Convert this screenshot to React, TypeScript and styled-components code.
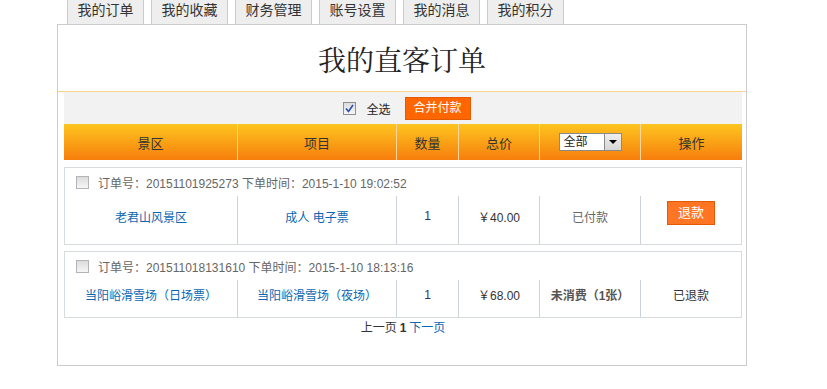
import styled, { createGlobalStyle } from "styled-components";

const GlobalStyle = createGlobalStyle`
  body {
    margin: 0;
    background: #fff;
    font-family: "Liberation Sans", "Noto Sans CJK SC", sans-serif;
    font-size: 12px;
    color: #333;
    overflow: hidden;
  }
`;

const tabs = ["我的订单", "我的收藏", "财务管理", "账号设置", "我的消息", "我的积分"];

const columns = "173px 159px 62px 81px 101px 102px";

type Order = {
  id: string;
  time: string;
  spot: string;
  item: string;
  qty: number;
  price: string;
  status: string;
  strong?: boolean;
  action: "refund" | string;
};

const orders: Order[] = [
  {
    id: "20151101925273",
    time: "2015-1-10 19:02:52",
    spot: "老君山风景区",
    item: "成人 电子票",
    qty: 1,
    price: "40.00",
    status: "已付款",
    action: "refund",
  },
  {
    id: "201511018131610",
    time: "2015-1-10 18:13:16",
    spot: "当阳峪滑雪场（日场票）",
    item: "当阳峪滑雪场（夜场）",
    qty: 1,
    price: "68.00",
    status: "未消费（1张）",
    strong: true,
    action: "已退款",
  },
];

const Page = styled.div`
  width: 690px;
  margin-left: 57px;
`;

const Tabs = styled.ul`
  display: flex;
  gap: 7px;
  margin: -6px 0 0 10px;
  padding: 0;
  list-style: none;
`;

const Tab = styled.li`
  width: 77px;
  height: 30px;
  box-sizing: border-box;
  background: #eee;
  border: 1px solid #ccc;
  border-bottom: none;
  line-height: 30px;
  text-align: center;
  font-size: 14px;
  color: #333;
`;

const Panel = styled.div`
  height: 342px;
  box-sizing: border-box;
  border: 1px solid #ccc;
`;

const Title = styled.h1`
  margin: 0;
  height: 66px;
  line-height: 68px;
  border-bottom: 1px solid #fcd48f;
  text-align: center;
  font-family: "Noto Serif CJK SC", "Noto Sans CJK SC", serif;
  font-size: 28px;
  font-weight: normal;
  color: #222;
`;

const Body = styled.div`
  padding: 0 4px 0 6px;
`;

const Toolbar = styled.div`
  height: 32px;
  display: flex;
  align-items: center;
  justify-content: center;
  padding-left: 8px;
  background: #f2f2f2;
`;

const Check = styled.span<{ $checked?: boolean }>`
  display: inline-flex;
  align-items: center;
  justify-content: center;
  width: 13px;
  height: 13px;
  box-sizing: border-box;
  border: 1px solid ${(p) => (p.$checked ? "#8f8f8f" : "#b4b4b4")};
  background: linear-gradient(#dcdcdc, #f6f6f6);
  svg {
    width: 9px;
    height: 9px;
  }
`;

const CheckLabel = styled.span`
  margin: 0 14px 0 10px;
  font-size: 12px;
  color: #222;
`;

const OrangeButton = styled.button<{ $size?: number }>`
  height: ${(p) => (p.$size === 13 ? 24 : 23)}px;
  padding: 0 ${(p) => (p.$size === 13 ? 10 : 8)}px;
  border: 1px solid #e45a00;
  background: ${(p) => (p.$size === 13 ? "#ff7523" : "#ff6600")};
  color: #fff;
  font-family: inherit;
  font-size: ${(p) => p.$size ?? 12}px;
  line-height: 20px;
  cursor: pointer;
`;

const HeadRow = styled.div`
  display: grid;
  grid-template-columns: ${columns};
  height: 36px;
  background: linear-gradient(#fdc51f, #f77e0d);
`;

const HeadCell = styled.div`
  display: flex;
  align-items: center;
  justify-content: center;
  font-size: 13px;
  color: #333;
  & + & {
    border-left: 1px solid #fbd79c;
  }
`;

const Select = styled.div`
  display: flex;
  width: 63px;
  height: 18px;
  box-sizing: border-box;
  border: 1px solid #8a8a8a;
  background: #fff;
  font-size: 12px;
  line-height: 16px;
  color: #222;
  span {
    flex: 1;
    padding-left: 4px;
  }
`;

const SelectArrow = styled.i`
  display: flex;
  align-items: center;
  justify-content: center;
  width: 16px;
  border-left: 1px solid #8a8a8a;
  background: linear-gradient(#eee, #d6d6d6);
  &::after {
    content: "";
    border: 4px solid transparent;
    border-top: 4px solid #000;
    border-bottom: none;
  }
`;

const Cards = styled.div`
  display: flex;
  flex-direction: column;
  gap: 6px;
  margin-top: 7px;
`;

const Card = styled.div`
  border: 1px solid #d6dbe0;
`;

const CardHead = styled.div`
  height: 28px;
  display: flex;
  align-items: center;
  gap: 9px;
  padding-left: 11px;
  color: #666;
  font-size: 12px;
`;

const CardRow = styled.div<{ $h: number }>`
  display: grid;
  grid-template-columns: 172px 159px 62px 81px 101px 101px;
  height: ${(p) => p.$h}px;
`;

const Cell = styled.div<{ $tone?: "link" | "muted" | "num" | "strong" }>`
  display: flex;
  align-items: center;
  justify-content: center;
  padding-bottom: 8px;
  font-size: 12px;
  color: ${(p) =>
    p.$tone === "link"
      ? "#0b67b2"
      : p.$tone === "muted"
      ? "#666"
      : p.$tone === "num"
      ? "#33336b"
      : p.$tone === "strong"
      ? "#555"
      : "#333"};
  font-weight: ${(p) => (p.$tone === "strong" ? "bold" : "normal")};
  & + & {
    border-left: 1px solid #ccd3db;
  }
  button {
    margin-bottom: 6px;
  }
`;

const Pager = styled.div`
  height: 20px;
  line-height: 20px;
  text-align: center;
  font-size: 12px;
  color: #333;
  b {
    margin: 0 3px;
  }
  a {
    color: #0b67b2;
    text-decoration: none;
  }
`;

const Tick = () => (
  <svg viewBox="0 0 9 9">
    <path d="M1 4.5 L3.5 7.5 L8 1" fill="none" stroke="#2b4fa8" strokeWidth="1.6" />
  </svg>
);

export default function App() {
  return (
    <Page>
      <GlobalStyle />
      <Tabs>
        {tabs.map((t) => (
          <Tab key={t}>{t}</Tab>
        ))}
      </Tabs>
      <Panel>
        <Title>我的直客订单</Title>
        <Body>
          <Toolbar>
            <Check $checked>
              <Tick />
            </Check>
            <CheckLabel>全选</CheckLabel>
            <OrangeButton>合并付款</OrangeButton>
          </Toolbar>
          <HeadRow>
            <HeadCell>景区</HeadCell>
            <HeadCell>项目</HeadCell>
            <HeadCell>数量</HeadCell>
            <HeadCell>总价</HeadCell>
            <HeadCell>
              <Select>
                <span>全部</span>
                <SelectArrow />
              </Select>
            </HeadCell>
            <HeadCell>操作</HeadCell>
          </HeadRow>
          <Cards>
            {orders.map((o) => (
              <Card key={o.id}>
                <CardHead>
                  <Check />
                  <span>
                    订单号：{o.id} 下单时间：{o.time}
                  </span>
                </CardHead>
                <CardRow $h={o.action === "refund" ? 48 : 37}>
                  <Cell $tone="link">{o.spot}</Cell>
                  <Cell $tone="link">{o.item}</Cell>
                  <Cell $tone="num">{o.qty}</Cell>
                  <Cell>￥{o.price}</Cell>
                  <Cell $tone={o.strong ? "strong" : "muted"}>{o.status}</Cell>
                  <Cell>
                    {o.action === "refund" ? (
                      <OrangeButton $size={13}>退款</OrangeButton>
                    ) : (
                      o.action
                    )}
                  </Cell>
                </CardRow>
              </Card>
            ))}
          </Cards>
          <Pager>
            上一页<b>1</b>
            <a href="#">下一页</a>
          </Pager>
        </Body>
      </Panel>
    </Page>
  );
}
